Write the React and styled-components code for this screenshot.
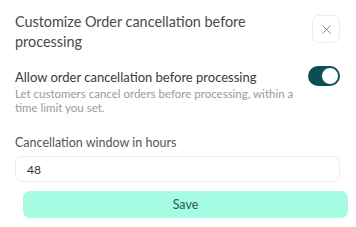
import React from "react";
import styled, { createGlobalStyle } from "styled-components";

const GlobalStyle = createGlobalStyle`
  body {
    margin: 0;
    background: #fff;
    font-family: 'Lato', 'Noto Sans', sans-serif;
  }
`;

const Panel = styled.div`
  width: 356px;
  height: 227px;
  box-sizing: border-box;
  padding: 12px 16px 0 15px;
  display: flex;
  flex-direction: column;
`;

const Header = styled.div`
  display: flex;
  justify-content: space-between;
  align-items: flex-start;
`;

const Title = styled.h2`
  margin: 0;
  width: 260px;
  font-size: 14.4px;
  font-weight: 400;
  line-height: 20px;
  color: #4a4a4a;
`;

const CloseButton = styled.button`
  width: 28px;
  height: 28px;
  margin-top: 3px;
  border: 1px solid #ececec;
  border-radius: 7px;
  background: #fff;
  display: flex;
  align-items: center;
  justify-content: center;
  padding: 0;
`;

const SettingRow = styled.div`
  display: flex;
  justify-content: space-between;
  align-items: flex-start;
  margin-top: 16px;
`;

const SettingText = styled.div`
  display: flex;
  flex-direction: column;
`;

const SettingLabel = styled.div`
  font-size: 13px;
  line-height: 18px;
  color: #3a3a3a;
`;

const SettingHint = styled.div`
  margin-top: 1px;
  width: 285px;
  font-size: 11.5px;
  line-height: 13.5px;
  color: #9a9a9a;
`;

const Toggle = styled.div`
  width: 32px;
  height: 20px;
  margin-top: -2px;
  border-radius: 10px;
  background: ${(p) => (p.$on ? "#0b4f55" : "#ccc")};
  display: flex;
  align-items: center;
  justify-content: ${(p) => (p.$on ? "flex-end" : "flex-start")};
  padding: 1px;
  box-sizing: border-box;
`;

const Knob = styled.div`
  width: 18px;
  height: 18px;
  border-radius: 50%;
  background: #fff;
  box-sizing: border-box;
  border: 1px solid #0b4f55;
`;

const FieldLabel = styled.label`
  margin-top: 21px;
  font-size: 12.5px;
  line-height: 16px;
  color: #555;
`;

const Input = styled.input`
  margin-top: 5px;
  width: 325px;
  height: 26px;
  box-sizing: border-box;
  border: 1px solid #ececec;
  border-radius: 7px;
  padding: 0 11px;
  font-family: inherit;
  font-size: 12px;
  color: #333;
  outline: none;
`;

const SaveButton = styled.button`
  margin-top: 9px;
  margin-left: 8px;
  width: 325px;
  height: 27px;
  border: none;
  border-radius: 7px;
  background: #a6fbe3;
  color: #2d5a5b;
  font-family: inherit;
  font-size: 12.5px;
`;

export default function App() {
  return (
    <>
      <GlobalStyle />
      <Panel>
        <Header>
          <Title>Customize Order cancellation before processing</Title>
          <CloseButton aria-label="Close">
            <svg width="9" height="9" viewBox="0 0 10 10">
              <path d="M1 1L9 9M9 1L1 9" stroke="#8a8a8a" strokeWidth="1.1" strokeLinecap="round" />
            </svg>
          </CloseButton>
        </Header>
        <SettingRow>
          <SettingText>
            <SettingLabel>Allow order cancellation before processing</SettingLabel>
            <SettingHint>
              Let customers cancel orders before processing, within a time limit you set.
            </SettingHint>
          </SettingText>
          <Toggle $on>
            <Knob />
          </Toggle>
        </SettingRow>
        <FieldLabel>Cancellation window in hours</FieldLabel>
        <Input defaultValue="48" />
        <SaveButton>Save</SaveButton>
      </Panel>
    </>
  );
}
